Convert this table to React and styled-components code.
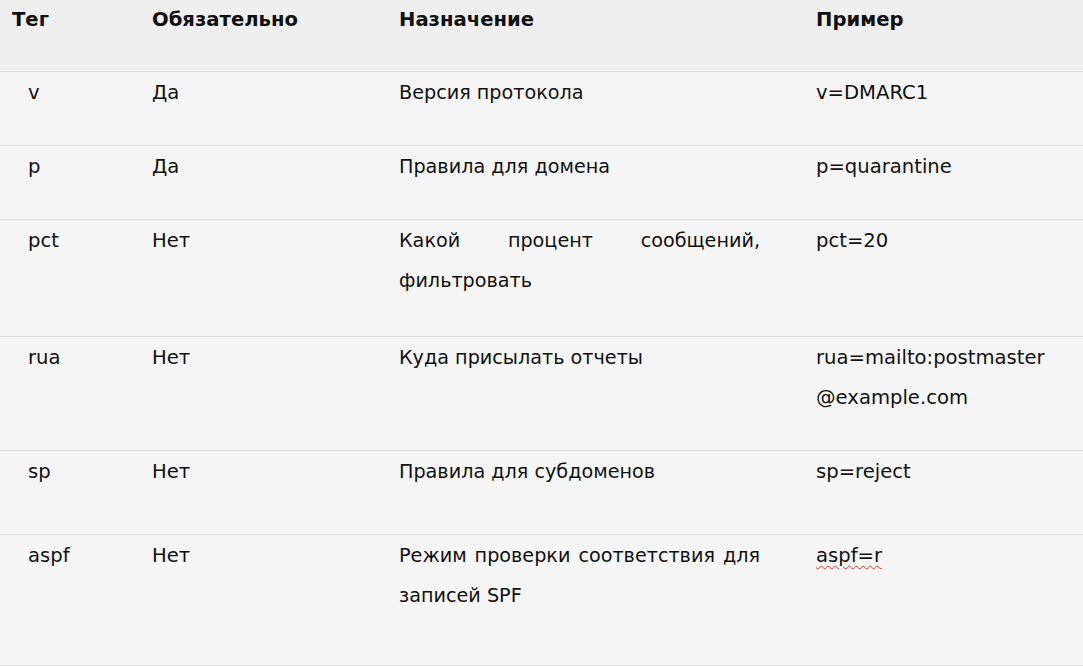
import React from "react";
import styled, { createGlobalStyle } from "styled-components";

const Global = createGlobalStyle`
  html, body { margin: 0; padding: 0; background: #f5f5f5; }
  body { font-family: "DejaVu Sans", Verdana, sans-serif; color: #111; }
`;

const Table = styled.div`
  width: 1083px;
  display: grid;
  grid-template-columns: 152px 247px 417px 1fr;
  background: #f5f5f5;
`;

const Row = styled.div`
  display: contents;
`;

const HeadCell = styled.div`
  background: #efefef;
  height: 72px;
  box-sizing: border-box;
  border-bottom: 1px solid #dddddd;
  font-weight: bold;
  font-size: 19.6px;
  line-height: 39px;
  padding-left: ${(p) => (p.$first ? "12px" : "0")};
`;

const Cell = styled.div`
  min-height: ${(p) => p.$h}px;
  border-bottom: 1px solid #dddddd;
  font-size: ${(p) => (p.$desc ? "19.2px" : "19.6px")};
  line-height: 40px;
  padding-top: 1px;
  box-sizing: border-box;
  padding-left: ${(p) => (p.$first ? "28px" : "0")};
  padding-right: ${(p) => (p.$desc ? "56px" : "0")};
  text-align: ${(p) => (p.$desc ? "justify" : "left")};
`;

const Misspelled = styled.span`
  text-decoration: underline wavy #e03030;
  text-decoration-thickness: 1px;
  text-underline-offset: 3px;
`;

const rows = [
  { tag: "v", req: "Да", desc: "Версия протокола", ex: "v=DMARC1", h: 74 },
  { tag: "p", req: "Да", desc: "Правила для домена", ex: "p=quarantine", h: 74 },
  { tag: "pct", req: "Нет", desc: "Какой процент сообщений, фильтровать", ex: "pct=20", h: 117 },
  { tag: "rua", req: "Нет", desc: "Куда присылать отчеты", ex: (<>rua=mailto:postmaster<br />@example.com</>), h: 114 },
  { tag: "sp", req: "Нет", desc: "Правила для субдоменов", ex: "sp=reject", h: 84 },
  { tag: "aspf", req: "Нет", desc: "Режим проверки соответствия для записей SPF", ex: <Misspelled>aspf=r</Misspelled>, h: 131 },
];

export default function App() {
  return (
    <>
      <Global />
      <Table>
        <Row>
          <HeadCell $first>Тег</HeadCell>
          <HeadCell>Обязательно</HeadCell>
          <HeadCell>Назначение</HeadCell>
          <HeadCell>Пример</HeadCell>
        </Row>
        {rows.map((r, i) => (
          <Row key={i}>
            <Cell $first $h={r.h}>{r.tag}</Cell>
            <Cell $h={r.h}>{r.req}</Cell>
            <Cell $desc $h={r.h}>{r.desc}</Cell>
            <Cell $h={r.h}>{r.ex}</Cell>
          </Row>
        ))}
      </Table>
    </>
  );
}
